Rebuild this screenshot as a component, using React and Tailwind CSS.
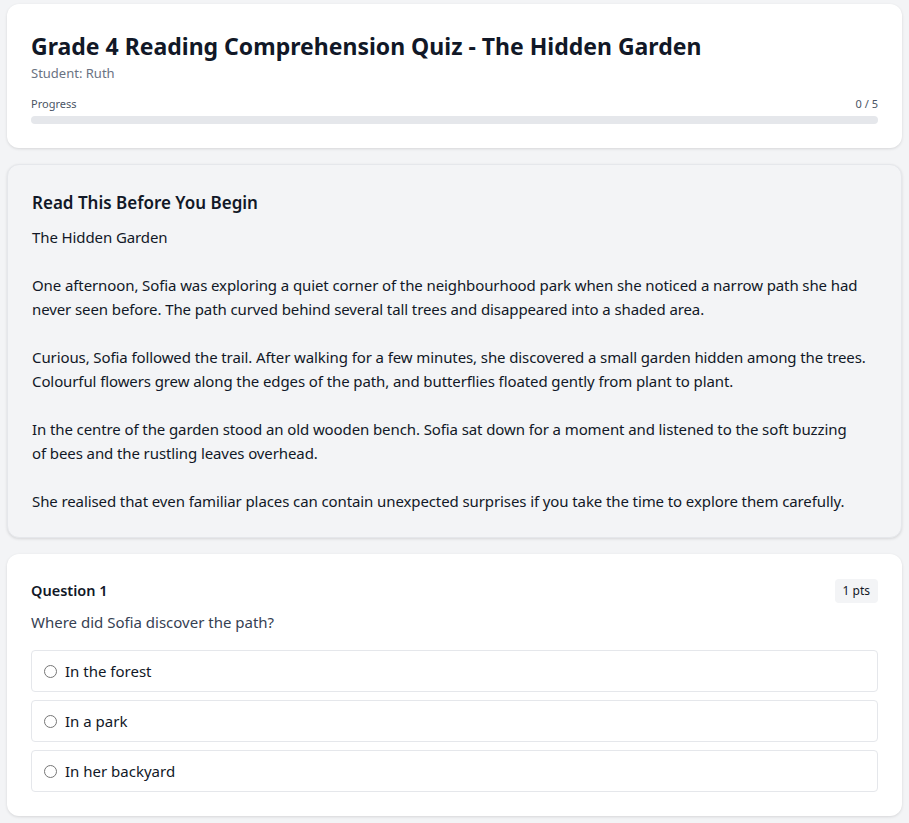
import React, { useState } from 'react';

const passage = `The Hidden Garden

One afternoon, Sofia was exploring a quiet corner of the neighbourhood park when she noticed a narrow path she had never seen before. The path curved behind several tall trees and disappeared into a shaded area.

Curious, Sofia followed the trail. After walking for a few minutes, she discovered a small garden hidden among the trees.
Colourful flowers grew along the edges of the path, and butterflies floated gently from plant to plant.

In the centre of the garden stood an old wooden bench. Sofia sat down for a moment and listened to the soft buzzing
of bees and the rustling leaves overhead.

She realised that even familiar places can contain unexpected surprises if you take the time to explore them carefully.`;

const options = ['In the forest', 'In a park', 'In her backyard'];

export default function App() {
  const [answer, setAnswer] = useState(null);

  return (
    <div className="min-h-screen bg-[#f3f4f6] px-[7px] pt-1 pb-6 font-['Noto_Sans',sans-serif] text-[#111827]">
      <div className="flex flex-col gap-4">
        {/* Header */}
        <div className="bg-white rounded-xl shadow-[0_1px_3px_rgba(0,0,0,0.12)] px-6 pt-[26px] pb-6">
          <h1 className="text-[23px] font-bold leading-8 text-[#111827]">
            Grade 4 Reading Comprehension Quiz - The Hidden Garden
          </h1>
          <p className="text-[13px] text-gray-500 mt-0.5">Student: Ruth</p>
          <div className="mt-3">
            <div className="flex justify-between text-[11px] leading-4 text-gray-600 mb-1">
              <span>Progress</span>
              <span>0 / 5</span>
            </div>
            <div className="h-2 rounded-full bg-[#e5e7eb]" />
          </div>
        </div>

        {/* Passage */}
        <div className="bg-[#f3f4f6] rounded-xl border border-gray-200 shadow-[0_1px_3px_rgba(0,0,0,0.12)] px-6 pt-6 pb-6">
          <h2 className="text-[17px] leading-7 font-semibold mb-2">Read This Before You Begin</h2>
          <p className="text-[15px] leading-6 tracking-[-0.1px] whitespace-pre-line">{passage}</p>
        </div>

        {/* Question */}
        <div className="bg-white rounded-xl shadow-[0_1px_3px_rgba(0,0,0,0.12)] px-6 pt-[25px] pb-6">
          <div className="flex items-center justify-between">
            <h3 className="text-[14.5px] font-semibold">Question 1</h3>
            <span className="text-xs bg-gray-100 rounded px-2 py-1">1 pts</span>
          </div>
          <p className="text-[15px] text-gray-700 mt-2 mb-[17px]">Where did Sofia discover the path?</p>
          <div className="flex flex-col gap-2">
            {options.map((opt) => (
              <label
                key={opt}
                className="flex items-center gap-2 border border-gray-200 rounded px-3 py-2 cursor-pointer"
              >
                <input
                  type="radio"
                  name="q1"
                  checked={answer === opt}
                  onChange={() => setAnswer(opt)}
                  className="w-[13px] h-[13px] m-0"
                />
                <span className="text-[15px] leading-6">{opt}</span>
              </label>
            ))}
          </div>
        </div>
      </div>
    </div>
  );
}
